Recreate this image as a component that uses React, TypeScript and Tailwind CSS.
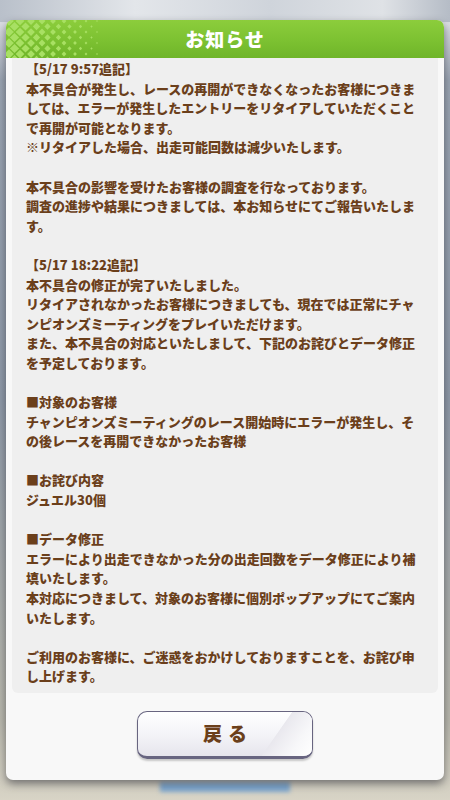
import React from "react";

const lines: string[] = [
  "【5/17 9:57追記】",
  "本不具合が発生し、レースの再開ができなくなったお客様につきま",
  "しては、エラーが発生したエントリーをリタイアしていただくこと",
  "で再開が可能となります。",
  "※リタイアした場合、出走可能回数は減少いたします。",
  "",
  "本不具合の影響を受けたお客様の調査を行なっております。",
  "調査の進捗や結果につきましては、本お知らせにてご報告いたしま",
  "す。",
  "",
  "【5/17 18:22追記】",
  "本不具合の修正が完了いたしました。",
  "リタイアされなかったお客様につきましても、現在では正常にチャ",
  "ンピオンズミーティングをプレイいただけます。",
  "また、本不具合の対応といたしまして、下記のお詫びとデータ修正",
  "を予定しております。",
  "",
  "■対象のお客様",
  "チャンピオンズミーティングのレース開始時にエラーが発生し、そ",
  "の後レースを再開できなかったお客様",
  "",
  "■お詫び内容",
  "ジュエル30個",
  "",
  "■データ修正",
  "エラーにより出走できなかった分の出走回数をデータ修正により補",
  "填いたします。",
  "本対応につきまして、対象のお客様に個別ポップアップにてご案内",
  "いたします。",
  "",
  "ご利用のお客様に、ご迷惑をおかけしておりますことを、お詫び申",
  "し上げます。",
];

// rotated checkerboard in the header's left corner, fading out to the right
function HeaderPattern() {
  const p = 11;
  const diamonds: { x: number; y: number; r: number }[] = [];
  for (let col = 0; col < 20; col++) {
    for (let row = 0; row < 5; row++) {
      const x = col * (p / 2) + 3;
      const y = row * p + (col % 2 ? p / 2 : 0) + 1;
      const r = 5 - x * 0.045;
      if (r > 0.9) diamonds.push({ x, y, r });
    }
  }
  return (
    <svg width="110" height="38" viewBox="0 0 110 38" className="absolute left-0 top-0">
      {diamonds.map((d, i) => (
        <polygon
          key={i}
          points={`${d.x},${d.y - d.r} ${d.x + d.r},${d.y} ${d.x},${d.y + d.r} ${d.x - d.r},${d.y}`}
          fill="#a8e063"
        />
      ))}
    </svg>
  );
}

export default function App() {
  return (
    <div
      className="relative w-[450px] h-[800px] overflow-hidden"
      style={{ fontFamily: '"Noto Sans CJK JP", "Noto Sans", sans-serif' }}
    >
      {/* blurred backdrop */}
      <div className="absolute inset-0 bg-[linear-gradient(180deg,#c9ced6_0%,#d9dce2_3%,#9aa4b2_10%,#8e99a8_50%,#b9b8ad_90%,#d8d4c6_100%)]" />
      <div className="absolute left-0 right-0 top-0 h-[22px] bg-[linear-gradient(90deg,#b9c0ca,#e3e6ea_30%,#cfd4db_60%,#dfe2e6_85%,#b5bcc6)]" />
      <div className="absolute left-[160px] top-[782px] w-[130px] h-[10px] bg-[#7ea7cf] blur-[2px]" />

      {/* dialog */}
      <div className="relative mx-[6px] mt-[20px] h-[760px] rounded-[7px] bg-[#f8f8f8] shadow-[0_4px_8px_rgba(40,40,50,0.55)] flex flex-col overflow-hidden">
        <div className="relative h-[38px] shrink-0 bg-[linear-gradient(180deg,#8ccd3c_0%,#7cc131_55%,#6fb52a_100%)] flex items-center justify-center">
          <HeaderPattern />
          <span className="relative text-white text-[19px] font-black tracking-[1px] pt-[1px]">お知らせ</span>
        </div>

        <div className="mx-[6px] h-[635px] rounded-b-[6px] bg-[#efefef] pl-[14px] pt-[1px]">
          {lines.map((l, i) => (
            <div
              key={i}
              className="h-[19.6px] leading-[19.6px] text-[13px] font-black text-[#6b3f1b] whitespace-nowrap"
            >
              {l || "\u00a0"}
            </div>
          ))}
        </div>

        <div className="flex flex-1 items-center justify-center pb-[4px]">
          <button className="relative w-[176px] h-[48px] rounded-[10px] border-[1.5px] border-[#686580] border-b-[3px] overflow-hidden bg-[linear-gradient(180deg,#ffffff_0%,#f4f4f8_50%,#e6e5ec_100%)] shadow-[0_2px_2px_rgba(0,0,0,0.2)]">
            <div className="absolute right-0 top-0 bottom-0 w-[62px] bg-[linear-gradient(125deg,transparent_0%,transparent_45%,#e9e8ee_46%,#f7f7f9_75%,#ffffff_100%)]" />
            <span className="relative text-[19px] font-black text-[#6b3f1b] tracking-[6px] pl-[6px]">戻る</span>
          </button>
        </div>
      </div>
    </div>
  );
}
